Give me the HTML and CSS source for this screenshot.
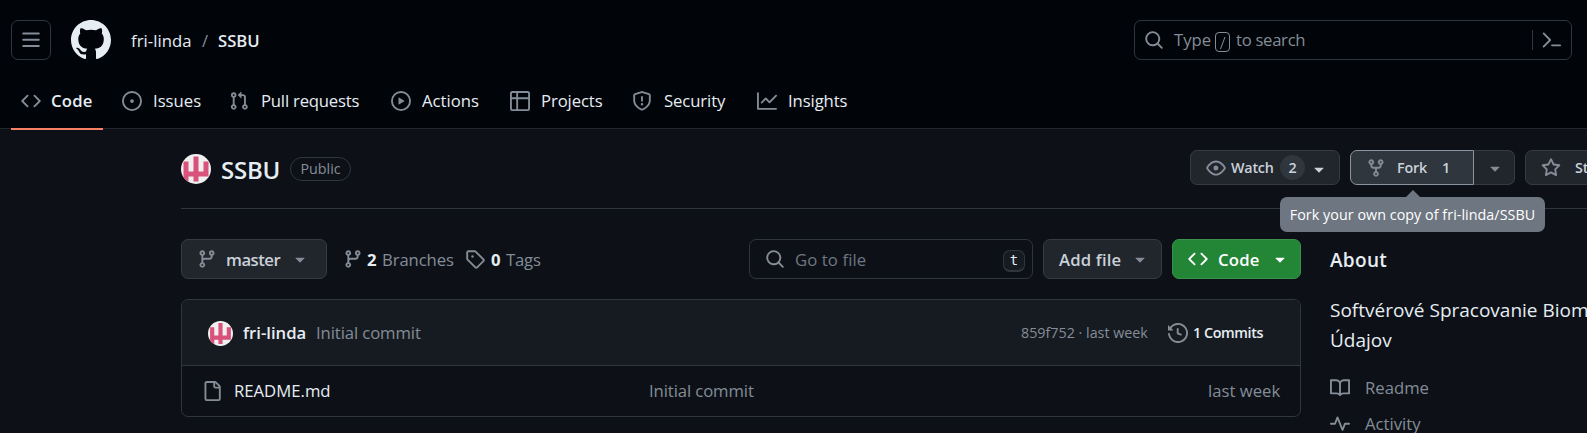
FILE: index.html
```html
<!DOCTYPE html>
<html lang="en">
<head>
<meta charset="utf-8">
<title>fri-linda/SSBU</title>
<link rel="stylesheet" href="styles.css">
</head>
<body>
<svg class="defs" aria-hidden="true">
  <symbol id="code" viewBox="0 0 16 16"><path d="m11.28 3.22 4.25 4.25a.75.75 0 0 1 0 1.06l-4.25 4.25a.749.749 0 0 1-1.275-.326.749.749 0 0 1 .215-.734L13.94 8l-3.72-3.72a.749.749 0 0 1 .326-1.275.749.749 0 0 1 .734.215Zm-6.56 0a.751.751 0 0 1 1.042.018.751.751 0 0 1 .018 1.042L2.06 8l3.72 3.72a.749.749 0 0 1-.326 1.275.749.749 0 0 1-.734-.215L.47 8.53a.75.75 0 0 1 0-1.06Z"/></symbol>
  <symbol id="branch" viewBox="0 0 16 16"><path d="M9.5 3.25a2.25 2.25 0 1 1 3 2.122V6A2.5 2.5 0 0 1 10 8.5H6a1 1 0 0 0-1 1v1.128a2.251 2.251 0 1 1-1.5 0V5.372a2.25 2.25 0 1 1 1.5 0v1.836A2.493 2.493 0 0 1 6 7h4a1 1 0 0 0 1-1v-.628A2.25 2.25 0 0 1 9.5 3.25Zm-6 0a.75.75 0 1 0 1.5 0 .75.75 0 0 0-1.5 0Zm8.25-.75a.75.75 0 1 0 0 1.5.75.75 0 0 0 0-1.5ZM4.25 12a.75.75 0 1 0 0 1.5.75.75 0 0 0 0-1.5Z"/></symbol>
  <symbol id="search" viewBox="0 0 16 16"><path d="M10.68 11.74a6 6 0 0 1-7.922-8.982 6 6 0 0 1 8.982 7.922l3.04 3.04a.749.749 0 0 1-.326 1.275.749.749 0 0 1-.734-.215ZM11.5 7a4.499 4.499 0 1 0-8.997 0A4.499 4.499 0 0 0 11.5 7Z"/></symbol>
  <symbol id="caret" viewBox="0 0 16 16"><path d="m4.427 7.427 3.396 3.396a.25.25 0 0 0 .354 0l3.396-3.396A.25.25 0 0 0 11.396 7H4.604a.25.25 0 0 0-.177.427Z"/></symbol>
  <symbol id="avatar" viewBox="0 0 30 30"><path fill="#f0f0f0" d="M0 0h30v30H0z"/><path fill="#d8527c" d="M2.5 7.5h5v10h5v-15h5v15h5v-10h5v15h-5v5H22.500v-5h-5v5h-5v-5h-5v5h-5z"/></symbol>
</svg>

<header class="header">
  <div class="topbar">
    <button class="menu-btn"><svg class="icon" viewBox="0 0 16 16"><path d="M1 2.75A.75.75 0 0 1 1.75 2h12.5a.75.75 0 0 1 0 1.500H1.750A.75.75 0 0 1 1 2.750Zm0 5A.75.75 0 0 1 1.750 7h12.500a.75.75 0 0 1 0 1.500H1.750A.75.75 0 0 1 1 7.750ZM1.750 12h12.500a.75.75 0 0 1 0 1.500H1.750a.75.75 0 0 1 0-1.500Z"/></svg></button>
    <svg class="logo" viewBox="0 0 16 16"><path d="M8 0c4.42 0 8 3.58 8 8a8.013 8.013 0 0 1-5.45 7.590c-.4.080-.55-.17-.55-.38 0-.27.010-1.130.010-2.200 0-.75-.25-1.230-.54-1.480 1.780-.2 3.650-.88 3.650-3.950 0-.88-.31-1.590-.82-2.150.080-.2.360-1.020-.08-2.120 0 0-.67-.22-2.200.82-.64-.18-1.320-.27-2-.27-.68 0-1.360.090-2 .27-1.530-1.030-2.200-.82-2.200-.82-.44 1.100-.16 1.920-.08 2.120-.51.560-.82 1.280-.82 2.150 0 3.060 1.860 3.750 3.640 3.950-.23.200-.44.550-.51 1.070-.46.210-1.610.550-2.330-.66-.15-.24-.6-.83-1.230-.82-.67.010-.27.380.010.530.34.190.730.900.82 1.130.16.450.680 1.310 2.690.940 0 .67.010 1.300.010 1.490 0 .21-.15.450-.55.380A7.995 7.995 0 0 1 0 8c0-4.420 3.580-8 8-8Z"/></svg>
    <div class="crumbs"><a class="owner">fri-linda</a><span class="sep">/</span><a class="repo">SSBU</a></div>
    <div class="search">
      <svg class="icon"><use href="#search"/></svg>
      <span class="type">Type</span><kbd class="slash"><svg viewBox="0 0 13 18"><path d="M9 4 4.500 16"/></svg></kbd><span class="to">to search</span>
      <span class="divider"></span>
      <svg class="icon" viewBox="0 0 16 16"><path d="m1.300 2.700 5.200 5.300-5.200 5.300M8 12.250h6.500" class="line"/></svg>
    </div>
  </div>
  <nav class="tabs">
    <a class="tab t-code"><svg class="icon"><use href="#code"/></svg><span>Code</span></a>
    <a class="tab t-issues"><svg class="icon" viewBox="0 0 16 16"><path d="M8 9.500a1.500 1.500 0 1 0 0-3 1.500 1.500 0 0 0 0 3Z"/><path d="M8 0a8 8 0 1 1 0 16A8 8 0 0 1 8 0ZM1.500 8a6.500 6.500 0 1 0 13 0 6.500 6.500 0 0 0-13 0Z"/></svg><span>Issues</span></a>
    <a class="tab t-pulls"><svg class="icon" viewBox="0 0 16 16"><path d="M1.500 3.250a2.250 2.250 0 1 1 3 2.122v5.256a2.251 2.251 0 1 1-1.500 0V5.372A2.250 2.250 0 0 1 1.500 3.250Zm5.677-.177L9.573.677A.25.25 0 0 1 10 .854V2.500h1A2.500 2.500 0 0 1 13.500 5v5.628a2.251 2.251 0 1 1-1.500 0V5a1 1 0 0 0-1-1h-1v1.646a.25.25 0 0 1-.427.177L7.177 3.427a.25.25 0 0 1 0-.354ZM3.750 2.500a.75.75 0 1 0 0 1.500.75.75 0 0 0 0-1.500Zm0 9.500a.75.75 0 1 0 0 1.500.75.75 0 0 0 0-1.500Zm8.250.750a.75.75 0 1 0 1.500 0 .75.75 0 0 0-1.500 0Z"/></svg><span>Pull requests</span></a>
    <a class="tab t-actions"><svg class="icon" viewBox="0 0 16 16"><path d="M8 0a8 8 0 1 1 0 16A8 8 0 0 1 8 0ZM1.500 8a6.500 6.500 0 1 0 13 0 6.500 6.500 0 0 0-13 0Zm4.879-2.773 4.264 2.559a.25.25 0 0 1 0 .428l-4.264 2.559A.25.25 0 0 1 6 10.559V5.442a.25.25 0 0 1 .379-.215Z"/></svg><span>Actions</span></a>
    <a class="tab t-projects"><svg class="icon" viewBox="0 0 16 16"><path d="M0 1.750C0 .784.784 0 1.750 0h12.500C15.216 0 16 .784 16 1.750v12.500A1.750 1.750 0 0 1 14.250 16H1.750A1.750 1.750 0 0 1 0 14.250ZM6.500 6.500v8h7.750a.25.25 0 0 0 .25-.25V6.500Zm8-1.500V1.750a.25.25 0 0 0-.25-.25H6.500V5Zm-13 1.500v7.750c0 .138.112.25.25.25H5v-8ZM5 5V1.500H1.750a.25.25 0 0 0-.25.25V5Z"/></svg><span>Projects</span></a>
    <a class="tab t-security"><svg class="icon" viewBox="0 0 16 16"><path d="M7.467.133a1.748 1.748 0 0 1 1.066 0l5.250 1.680A1.750 1.750 0 0 1 15 3.480V7c0 1.566-.32 3.182-1.303 4.682-.983 1.498-2.585 2.813-5.032 3.855a1.697 1.697 0 0 1-1.330 0c-2.447-1.042-4.049-2.357-5.032-3.855C1.320 10.182 1 8.566 1 7V3.480a1.750 1.750 0 0 1 1.217-1.667Zm.61 1.429a.25.25 0 0 0-.153 0l-5.250 1.680a.25.25 0 0 0-.174.238V7c0 1.358.275 2.666 1.057 3.860.784 1.194 2.121 2.340 4.366 3.297a.196.196 0 0 0 .154 0c2.245-.956 3.582-2.104 4.366-3.298C13.225 9.666 13.500 8.360 13.500 7V3.480a.251.251 0 0 0-.174-.237l-5.250-1.680ZM8.750 4.750v3a.75.75 0 0 1-1.500 0v-3a.75.75 0 0 1 1.500 0ZM9 10.500a1 1 0 1 1-2 0 1 1 0 0 1 2 0Z"/></svg><span>Security</span></a>
    <a class="tab t-insights"><svg class="icon" viewBox="0 0 16 16"><path d="M1.500 1.750V13.500h13.750a.75.75 0 0 1 0 1.500H.750a.75.75 0 0 1-.75-.75V1.750a.75.75 0 0 1 1.500 0Zm14.280 2.530-5.250 5.250a.75.75 0 0 1-1.060 0L7 7.060 4.280 9.780a.751.751 0 0 1-1.042-.018.751.751 0 0 1-.018-1.042l3.250-3.250a.75.75 0 0 1 1.060 0L10 7.940l4.720-4.720a.751.751 0 0 1 1.042.018.751.751 0 0 1 .018 1.042Z"/></svg><span>Insights</span></a>
  </nav>
</header>

<main class="main">
  <section class="titlebar">
    <svg class="avatar"><use href="#avatar"/></svg>
    <h1 class="repo-name">SSBU</h1>
    <span class="badge">Public</span>
    <div class="actions">
      <button class="btn small watch"><svg class="icon" viewBox="0 0 16 16"><path d="M8 2c1.981 0 3.671.992 4.933 2.078 1.270 1.091 2.187 2.345 2.637 3.023a1.620 1.620 0 0 1 0 1.798c-.45.678-1.367 1.932-2.637 3.023C11.670 13.008 9.981 14 8 14c-1.981 0-3.671-.992-4.933-2.078C1.797 10.830.880 9.576.430 8.898a1.620 1.620 0 0 1 0-1.798c.45-.677 1.367-1.931 2.637-3.022C4.330 2.992 6.019 2 8 2ZM1.679 7.932a.12.12 0 0 0 0 .136c.411.622 1.241 1.750 2.366 2.717C5.176 11.758 6.527 12.500 8 12.500c1.473 0 2.825-.742 3.955-1.715 1.124-.967 1.954-2.096 2.366-2.717a.12.12 0 0 0 0-.136c-.412-.621-1.242-1.750-2.366-2.717C10.824 4.242 9.473 3.500 8 3.500c-1.473 0-2.825.742-3.955 1.715-1.124.967-1.954 2.096-2.366 2.717ZM8 10a2 2 0 1 1-.001-3.999A2 2 0 0 1 8 10Z"/></svg><span class="watch-label">Watch</span><span class="counter">2</span><svg class="icon caret light"><use href="#caret"/></svg></button>
      <div class="fork-group">
        <button class="btn small fork"><svg class="icon" viewBox="0 0 16 16"><path d="M5 5.372v.878c0 .414.336.75.75.75h4.500a.75.75 0 0 0 .75-.75v-.878a2.250 2.250 0 1 1 1.500 0v.878a2.250 2.250 0 0 1-2.250 2.250h-1.500v2.128a2.251 2.251 0 1 1-1.500 0V8.500h-1.500A2.250 2.250 0 0 1 3.500 6.250v-.878a2.250 2.250 0 1 1 1.500 0ZM5 3.250a.75.75 0 1 0-1.500 0 .75.75 0 0 0 1.500 0Zm6.750.750a.75.75 0 1 0 0-1.500.75.75 0 0 0 0 1.500Zm-3 8.750a.75.75 0 1 0-1.500 0 .75.75 0 0 0 1.500 0Z"/></svg><span class="fork-label">Fork</span><span>1</span></button><button class="btn small fork-more"><svg class="icon caret"><use href="#caret"/></svg></button>
        <div class="tooltip">Fork your own copy of fri-linda/SSBU</div>
      </div>
      <button class="btn small star"><svg class="icon" viewBox="0 0 16 16"><path d="M8 .25a.75.75 0 0 1 .673.418l1.882 3.815 4.210.612a.75.75 0 0 1 .416 1.279l-3.046 2.970.719 4.192a.751.751 0 0 1-1.088.791L8 12.347l-3.766 1.980a.75.75 0 0 1-1.088-.79l.72-4.194L.818 6.374a.75.75 0 0 1 .416-1.280l4.210-.611L7.327.668A.75.75 0 0 1 8 .25Zm0 2.445L6.615 5.500a.75.75 0 0 1-.564.410l-3.097.450 2.240 2.184a.75.75 0 0 1 .216.664l-.528 3.084 2.769-1.456a.75.75 0 0 1 .698 0l2.770 1.456-.53-3.084a.75.75 0 0 1 .216-.664l2.240-2.183-3.096-.45a.75.75 0 0 1-.564-.41L8 2.694Z"/></svg><span>Star</span></button>
    </div>
  </section>

  <div class="columns">
    <div class="files">
      <div class="toolbar">
        <button class="btn master"><svg class="icon"><use href="#branch"/></svg><span>master</span><svg class="icon caret"><use href="#caret"/></svg></button>
        <a class="stat branches"><svg class="icon"><use href="#branch"/></svg><b>2</b><span>Branches</span></a>
        <a class="stat tags"><svg class="icon" viewBox="0 0 16 16"><path d="M1 7.775V2.750C1 1.784 1.784 1 2.750 1h5.025c.464 0 .910.184 1.238.513l6.250 6.250a1.750 1.750 0 0 1 0 2.474l-5.026 5.026a1.750 1.750 0 0 1-2.474 0l-6.250-6.250A1.752 1.752 0 0 1 1 7.775Zm1.500 0c0 .066.026.130.073.177l6.250 6.250a.25.25 0 0 0 .354 0l5.025-5.025a.25.25 0 0 0 0-.354l-6.250-6.250a.25.25 0 0 0-.177-.073H2.750a.25.25 0 0 0-.25.25ZM6 5a1 1 0 1 1 0 2 1 1 0 0 1 0-2Z"/></svg><b>0</b><span>Tags</span></a>
        <div class="goto"><svg class="icon"><use href="#search"/></svg><span>Go to file</span><kbd>t</kbd></div>
        <button class="btn add"><span>Add file</span><svg class="icon caret"><use href="#caret"/></svg></button>
        <button class="btn green"><svg class="icon"><use href="#code"/></svg><span>Code</span><svg class="icon caret"><use href="#caret"/></svg></button>
      </div>
      <div class="table">
        <div class="commit">
          <svg class="avatar mini"><use href="#avatar"/></svg><b class="author">fri-linda</b><span class="message">Initial commit</span>
          <span class="sha">859f752 · last week</span>
          <svg class="icon" viewBox="0 0 16 16"><path d="m.427 1.927 1.215 1.215a8.002 8.002 0 1 1-1.600 5.685.75.75 0 1 1 1.493-.154 6.500 6.500 0 1 0 1.180-4.458l1.358 1.358A.25.25 0 0 1 3.896 6H.250A.25.25 0 0 1 0 5.750V2.104a.25.25 0 0 1 .427-.177ZM7.750 4a.75.75 0 0 1 .75.75v2.992l2.028.812a.75.75 0 0 1-.557 1.392l-2.500-1A.751.751 0 0 1 7 8.250v-3.500A.75.75 0 0 1 7.750 4Z"/></svg>
          <b class="count">1 Commits</b>
        </div>
        <div class="row">
          <svg class="icon" viewBox="0 0 16 16"><path d="M2 1.750C2 .784 2.784 0 3.750 0h6.586c.464 0 .909.184 1.237.513l2.914 2.914c.329.328.513.773.513 1.237v9.586A1.750 1.750 0 0 1 13.250 16h-9.500A1.750 1.750 0 0 1 2 14.250Zm1.750-.25a.25.25 0 0 0-.25.25v12.500c0 .138.112.25.25.25h9.500a.25.25 0 0 0 .25-.25V6h-2.750A1.750 1.750 0 0 1 9 4.250V1.500Zm6.750.062V4.250c0 .138.112.25.25.25h2.688l-.011-.013-2.914-2.914-.013-.011Z"/></svg>
          <span class="file">README.md</span><span class="file-msg">Initial commit</span><span class="age">last week</span>
        </div>
      </div>
    </div>
    <aside class="about">
      <h2>About</h2>
      <p>Softvérové Spracovanie Biomedicínskych Údajov</p>
      <a class="link"><svg class="icon" viewBox="0 0 16 16"><path d="M0 1.750A.75.75 0 0 1 .75 1h4.253c1.227 0 2.317.590 3 1.501A3.743 3.743 0 0 1 11.006 1h4.245a.75.75 0 0 1 .75.75v10.500a.75.75 0 0 1-.75.75h-4.507a2.250 2.250 0 0 0-1.591.659l-.622.621a.75.75 0 0 1-1.060 0l-.622-.621A2.250 2.250 0 0 0 5.258 13H.750a.75.75 0 0 1-.75-.75Zm7.251 10.324.004-5.073-.002-2.253A2.250 2.250 0 0 0 5.003 2.500H1.500v9h3.757a3.750 3.750 0 0 1 1.994.574ZM8.755 4.750l-.004 7.322a3.752 3.752 0 0 1 1.992-.572H14.500v-9h-3.495a2.250 2.250 0 0 0-2.250 2.250Z"/></svg><span>Readme</span></a>
      <a class="link"><svg class="icon" viewBox="0 0 16 16"><path d="M6 2c.306 0 .582.187.696.471L10 10.731l1.304-3.260A.751.751 0 0 1 12 7h3.250a.75.75 0 0 1 0 1.500h-2.742l-1.812 4.528a.751.751 0 0 1-1.392 0L6 4.770 4.696 8.030A.750.750 0 0 1 4 8.500H.750a.75.75 0 0 1 0-1.500h2.742l1.812-4.529A.751.751 0 0 1 6 2Z"/></svg><span>Activity</span></a>
    </aside>
  </div>
</main>
</body>
</html>
```
FILE: styles.css
```css
* { box-sizing: border-box; }
body {
  margin: 0;
  width: 1587px;
  height: 433px;
  overflow: hidden;
  background: #0d1117;
  color: #e6edf3;
  font-family: "Open Sans", "Noto Sans", sans-serif;
  font-size: 16.7px;
  line-height: 26px;
  white-space: nowrap;
}
button { font: inherit; color: inherit; padding: 0; margin: 0; background: none; text-align: left; }
.defs { position: absolute; width: 0; height: 0; }
.icon { width: 20px; height: 20px; flex: none; fill: #848d97; display: block; }
.line { fill: none; stroke: #848d97; stroke-width: 1.5; stroke-linecap: round; stroke-linejoin: round; }

.header { height: 129px; background: #010409; border-bottom: 1px solid #21262d; }
.topbar { display: flex; align-items: center; height: 80px; padding-left: 11px; }
.menu-btn { width: 40px; height: 40px; border: 1px solid #30363d; border-radius: 7px; display: flex; align-items: center; justify-content: center; }
.logo { width: 40px; height: 40px; margin-left: 20px; fill: #e6edf3; }
.crumbs { display: flex; width: 1003px; margin-left: 20px; padding-top: 1px; }
.owner { width: 71px; letter-spacing: 0.05px; }
.sep { width: 16px; color: #848d97; }
.repo { font-weight: 600; }
.search { width: 438px; height: 40px; border: 1px solid #30363d; border-radius: 7px; display: flex; align-items: center; padding-left: 9px; color: #848d97; }
.search > * { flex: none; }
.type { width: 41px; margin-left: 10px; }
.slash { width: 15px; height: 20px; border: 1px solid #848d97; border-radius: 4px; margin: 3px 6px 0 0; }
.slash svg { display: block; width: 13px; height: 18px; fill: none; stroke: #848d97; }
.to { width: 296px; letter-spacing: -0.3px; }
.divider { width: 1px; height: 20px; background: #30363d; margin-right: 9px; }

.tabs { display: flex; height: 49px; padding-left: 11px; }
.tab { display: flex; align-items: center; padding: 0 0 9px 10px; height: 50px; gap: 10px; }
.t-code { width: 92px; border-bottom: 2px solid #f78166; padding-bottom: 7px; font-weight: 600; margin-right: 9px; letter-spacing: 0.2px; }
.t-issues { width: 107px; gap: 11px; }
.t-pulls { width: 162px; gap: 12px; letter-spacing: -0.2px; }
.t-actions { width: 119px; gap: 11px; }
.t-projects { width: 122px; gap: 11px; letter-spacing: -0.1px; }
.t-security { width: 125px; gap: 12px; letter-spacing: -0.1px; }
.t-insights { gap: 11px; letter-spacing: -0.1px; }

.main { padding-left: 181px; }
.titlebar { display: flex; height: 80px; padding-top: 21px; align-items: flex-start; border-bottom: 1px solid #30363d; }
.titlebar > * { flex: none; }
.avatar { width: 30px; height: 30px; border-radius: 50%; flex: none; margin-top: 4px; }
.repo-name { font-size: 24px; font-weight: 600; line-height: 36px; width: 69px; margin: 2px 0 0 10px; letter-spacing: -0.2px; }
.badge { width: 61px; height: 24px; border: 1px solid #30363d; border-radius: 12px; margin-top: 7px; text-align: center; color: #848d97; font-size: 14.3px; line-height: 22px; font-weight: 500; }
.actions { display: flex; margin-left: 839px; }
.btn { display: flex; align-items: center; height: 40px; border: 1px solid #363b42; border-radius: 7px; background: #21262d; color: #c9d1d9; font-weight: 600; flex: none; }
.btn .icon { fill: #848d97; }
.btn .light { fill: #c9d1d9; }
.small { height: 35px; font-size: 14.3px; }
.small > * { flex: none; }
.watch { width: 150px; padding-left: 15px; }
.watch-label { width: 44px; margin-left: 5px; letter-spacing: -0.2px; }
.counter { width: 25px; height: 25px; border-radius: 13px; background: #30363d; text-align: center; line-height: 25px; margin: 0 4px 0 5px; }
.watch .caret { margin-top: 2px; }
.fork-group { display: flex; position: relative; margin: 0 10px; }
.fork { width: 124px; padding-left: 15px; background: #30363d; border-color: #8b949e; border-radius: 7px 0 0 7px; }
.fork-label { width: 45px; margin-left: 11px; letter-spacing: -0.2px; }
.fork-more { width: 41px; border-left: 0; border-radius: 0 7px 7px 0; padding-left: 11px; }
.star { width: 120px; padding-left: 15px; gap: 14px; }
.tooltip { position: absolute; z-index: 2; top: 47px; left: -70px; width: 265px; height: 35px; border-radius: 7px; background: #6e7681; color: #fff; text-align: center; font-size: 14.3px; line-height: 36px; letter-spacing: 0.05px; }
.tooltip::before { content: ""; position: absolute; left: 126px; top: -7px; border: 7px solid transparent; border-top: 0; border-bottom-color: #6e7681; }

.columns { display: flex; padding-top: 30px; }
.files { width: 1120px; flex: none; }
.toolbar { display: flex; align-items: center; height: 40px; }
.toolbar > *, .toolbar .btn > *, .goto > * { flex: none; }
.toolbar span { position: static; padding-top: 1px; }
.master { width: 146px; padding-left: 15px; }
.master span { width: 64px; margin-left: 9px; letter-spacing: -0.5px; }
.master .caret, .add .caret, .green .caret { margin-left: 0; }
.stat { display: flex; align-items: center; color: #848d97; font-weight: 500; }
.stat b { width: 15px; padding-top: 1px; color: #e6edf3; font-weight: 700; letter-spacing: -0.2px; }
.branches { width: 122px; margin-left: 16px; letter-spacing: -0.1px; }
.branches b { margin-left: 4px; }
.tags { width: 284px; letter-spacing: -0.2px; }
.tags b { margin-left: 6px; }
.goto { width: 284px; height: 40px; border: 1px solid #30363d; border-radius: 7px; display: flex; align-items: center; padding-left: 15px; color: #6e7681; margin-right: 10px; }
.goto span { width: 208px; margin-left: 10px; letter-spacing: 0.1px; }
.goto kbd { width: 22px; height: 22px; border: 1px solid #30363d; border-bottom-width: 2px; border-radius: 7px; background: #161b22; color: #e6edf3; font: 14px/19px "DejaVu Sans Mono", monospace; text-align: center; margin-top: 4px; }
.add { width: 119px; padding-left: 15px; margin-right: 10px; }
.add span { width: 71px; letter-spacing: 0.15px; }
.green { width: 129px; background: #238636; border-color: #39924a; color: #fff; padding-left: 15px; }
.green .icon { fill: #fff; }
.green span { width: 52px; margin-left: 10px; letter-spacing: 0.2px; }

.table { height: 118px; margin-top: 20px; border: 1px solid #30363d; border-radius: 7px; overflow: hidden; }
.commit { display: flex; align-items: center; height: 66px; background: #161b22; border-bottom: 1px solid #30363d; padding-left: 26px; }
.commit > *, .row > * { flex: none; }
.mini { width: 25px; height: 25px; margin: 2px 10px 0 0; }
.author { width: 73px; font-weight: 600; }
.message { width: 705px; color: #848d97; letter-spacing: -0.1px; }
.sha { width: 147px; color: #848d97; font-size: 14.3px; }
.count { margin-left: 5px; font-size: 14.3px; font-weight: 600; letter-spacing: -0.4px; }
.row { display: flex; align-items: center; height: 50px; padding-left: 20px; color: #848d97; }
.file { width: 415px; margin-left: 12px; color: #e6edf3; }
.file-msg { width: 559px; letter-spacing: -0.1px; }

.about { padding-left: 29px; width: 450px; flex: none; }
.about h2 { font-size: 19px; font-weight: 600; line-height: 30px; margin: 6px 0 20px; letter-spacing: 0.3px; }
.about p { font-size: 19px; line-height: 30px; margin: 0 0 20px; white-space: normal; width: 400px; }
.link { display: flex; align-items: center; gap: 15px; height: 26px; margin-bottom: 10px; color: #848d97; }
```
